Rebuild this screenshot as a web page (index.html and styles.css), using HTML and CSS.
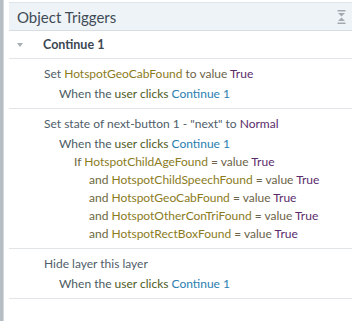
FILE: index.html
```html
<!DOCTYPE html>
<html lang="en">
<head>
    <meta charset="UTF-8">
    <meta name="viewport" content="width=device-width, initial-scale=1.0">
    <title>Object Triggers</title>
    <link rel="stylesheet" href="styles.css">
</head>
<body>
    <div class="rail"></div>

    <section class="panel">
        <header class="panel-head">
            <span class="panel-title">Object Triggers</span>
            <!-- collapse all -->
            <svg class="collapse" width="9" height="14" viewBox="0 0 9 14">
                <rect x="0.5" y="0" width="8" height="1.5"/>
                <polygon points="1,3 8,3 4.5,6.5"/>
                <polygon points="1,11 8,11 4.5,7.5"/>
                <rect x="0.5" y="12.5" width="8" height="1.5"/>
            </svg>
        </header>

        <div class="group-head">
            <span class="caret"></span>
            <span class="group-name">Continue 1</span>
        </div>

        <div class="trigger">
            <div class="line">Set <span class="var">HotspotGeoCabFound</span> <span class="op">to value</span> <span class="val">True</span></div>
            <div class="line when">When the <span class="ev">user clicks</span> <span class="obj">Continue 1</span></div>
        </div>

        <div class="trigger">
            <div class="line">Set state of next-button 1 - "next" to <span class="val">Normal</span></div>
            <div class="line when">When the <span class="ev">user clicks</span> <span class="obj">Continue 1</span></div>
            <div class="line cond"><span class="kw">If</span> <span class="var">HotspotChildAgeFound</span> <span class="op">= value</span> <span class="val">True</span></div>
            <div class="line and"><span class="kw">and</span> <span class="var">HotspotChildSpeechFound</span> <span class="op">= value</span> <span class="val">True</span></div>
            <div class="line and"><span class="kw">and</span> <span class="var">HotspotGeoCabFound</span> <span class="op">= value</span> <span class="val">True</span></div>
            <div class="line and"><span class="kw">and</span> <span class="var">HotspotOtherConTriFound</span> <span class="op">= value</span> <span class="val">True</span></div>
            <div class="line and"><span class="kw">and</span> <span class="var">HotspotRectBoxFound</span> <span class="op">= value</span> <span class="val">True</span></div>
        </div>

        <div class="trigger">
            <div class="line">Hide layer this layer</div>
            <div class="line when">When the <span class="ev">user clicks</span> <span class="obj">Continue 1</span></div>
        </div>
    </section>
</body>
</html>
```

FILE: styles.css
```css
/* Page */
body {
    margin: 0;
    display: flex;
    min-height: 321px;
    background: #ffffff;
    font-family: Lato, 'Noto Sans', sans-serif;
    font-size: 12px;
    color: #4f5d69;
}

/* Left splitter */
.rail {
    width: 3px;
    background: #b6bec3;
    border-right: 1px solid #d3d9dc;
    margin-right: 5px;
}

.panel {
    flex: 1;
    padding-top: 2px;
}

/* Panel heading */
.panel-head {
    display: flex;
    align-items: center;
    justify-content: space-between;
    height: 27px;
    padding: 0 6px 0 8px;
    background: #eef3f7;
    border-top: 1px solid #dde4e9;
    border-bottom: 1px solid #d6dee4;
}

.panel-title {
    font-size: 15px;
    color: #3f4b56;
}

.collapse {
    fill: #a2aaaf;
}

/* Trigger group */
.group-head {
    display: flex;
    align-items: center;
    height: 27px;
    border-bottom: 1px solid #e2e5e7;
}

.caret {
    width: 0;
    height: 0;
    margin: 1px 20px 0 8px;
    border-left: 3.5px solid transparent;
    border-right: 3.5px solid transparent;
    border-top: 4px solid #a7afb4;
}

.group-name {
    font-weight: bold;
    font-size: 12.5px;
    color: #3b4752;
}

/* Single trigger */
.trigger {
    padding: 6px 0 5px 35px;
    border-bottom: 1px solid #e2e5e7;
}

.line {
    line-height: 18px;
    white-space: nowrap;
}

.when {
    margin-top: 2px;
    padding-left: 15px;
    color: #4b5b62;
}

.cond {
    padding-left: 30px;
}

.and {
    padding-left: 45px;
}

/* Token colours */
.var {
    color: #8b7b1d;
}

.op {
    color: #6c6348;
}

.val {
    color: #5b2b6c;
}

.kw {
    color: #6c683e;
}

.ev {
    color: #4e5b1e;
}

.obj {
    color: #2a7eb0;
}
```
